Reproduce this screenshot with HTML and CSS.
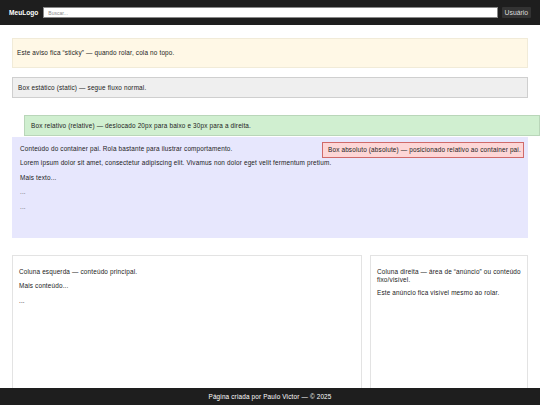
FILE: index.html
```html
<!DOCTYPE html>
<html lang="pt-BR">
<head>
<meta charset="utf-8">
<title>Posicionamento</title>
<link rel="stylesheet" href="styles.css">
</head>
<body>
<header class="topbar">
  <div class="logo">MeuLogo</div>
  <input class="search" type="text" placeholder="Buscar...">
  <button class="user">Usuário</button>
</header>
<main class="main">
  <div class="sticky"><p>Este aviso fica “sticky” — quando rolar, cola no topo.</p></div>
  <div class="static">Box estático (static) — segue fluxo normal.</div>
  <div class="relative">Box relativo (relative) — deslocado 20px para baixo e 30px para a direita.</div>
  <div class="container">
    <p>Conteúdo do container pai. Rola bastante para ilustrar comportamento.</p>
    <p>Lorem ipsum dolor sit amet, consectetur adipiscing elit. Vivamus non dolor eget velit fermentum pretium.</p>
    <p>Mais texto...</p>
    <p class="dots">...</p>
    <p class="dots">...</p>
    <div class="absolute">Box absoluto (absolute) — posicionado relativo ao container pai.</div>
  </div>
  <div class="columns">
    <section class="col col-left">
      <p>Coluna esquerda — conteúdo principal.</p>
      <p>Mais conteúdo...</p>
      <p>...</p>
    </section>
    <aside class="col col-right">
      <p>Coluna direita — área de “anúncio” ou conteúdo fixo/visível.</p>
      <p>Este anúncio fica visível mesmo ao rolar.</p>
    </aside>
  </div>
</main>
<footer class="footer">Página criada por Paulo Victor — © 2025</footer>
</body>
</html>
```
FILE: styles.css
```css
* { box-sizing: border-box; }
html, body { margin: 0; padding: 0; }
body {
  font-family: "Liberation Sans", Arial, sans-serif;
  font-size: 6.4px;
  letter-spacing: 0.16px;
  line-height: 7.6px;
  color: #222;
  background: #fff;
  width: 540px;
  height: 405px;
  overflow: hidden;
}
p { margin: 0 0 6.8px; }

.topbar {
  height: 25px;
  background: #1e1e1e;
  display: flex;
  align-items: center;
  padding: 0 9px;
  gap: 5px;
}
.logo {
  color: #fff;
  font-weight: bold;
  font-size: 6.6px;
  letter-spacing: 0;
}
.search {
  flex: 1;
  height: 11px;
  border: 1px solid #888;
  background: #fff;
  font-family: "Liberation Sans", Arial, sans-serif;
  font-size: 5px;
  padding: 0 4px;
  margin: 0;
  outline: none;
}
.search::placeholder { color: #888; }
.user {
  height: 11px;
  margin: 0 0 0 -1px;
  padding: 0 3px;
  background: #333;
  color: #ddd;
  border: none;
  border-radius: 1px;
  font-family: "Liberation Sans", Arial, sans-serif;
  font-size: 6.8px;
  line-height: 11px;
}

.main { padding: 13px 12px 0; }

.sticky {
  background: #fff8e6;
  border: 1px solid #f1ebd8;
  padding: 10px 4px;
  height: 30px;
  display: flex;
  align-items: center;
}
.sticky p { margin: 0; }

.static {
  margin-top: 9px;
  height: 21px;
  background: #efefef;
  border: 1px solid #cfcfcf;
  padding: 0 5px;
  display: flex;
  align-items: center;
}

.relative {
  margin: 17px -12px 0 12px;
  height: 21px;
  background: #d0efd0;
  border: 1px solid #b9d6b9;
  padding: 0 6px;
  display: flex;
  align-items: center;
}

.container {
  position: relative;
  margin-top: 1px;
  height: 101px;
  background: #e7e7fd;
  padding: 8px 8px;
}
.container .dots { color: #666; }
.absolute {
  position: absolute;
  top: 5px;
  right: 4px;
  width: 202px;
  height: 16px;
  background: #fdd6d6;
  border: 1px solid #cf6a6a;
  display: flex;
  align-items: center;
  padding: 0 5px;
  white-space: nowrap;
}

.columns {
  margin-top: 17px;
  display: flex;
  gap: 8px;
}
.col {
  background: #fff;
  border: 1px solid #e3e3e3;
  height: 160px;
  padding: 12px 6px;
}
.col-left { flex: 0 0 350px; }
.col-right { flex: 1; }
.col-right p { margin-bottom: 6px; }

.footer {
  position: fixed;
  left: 0;
  right: 0;
  bottom: 0;
  height: 17px;
  background: #1e1e1e;
  color: #fff;
  display: flex;
  align-items: center;
  justify-content: center;
}
```
